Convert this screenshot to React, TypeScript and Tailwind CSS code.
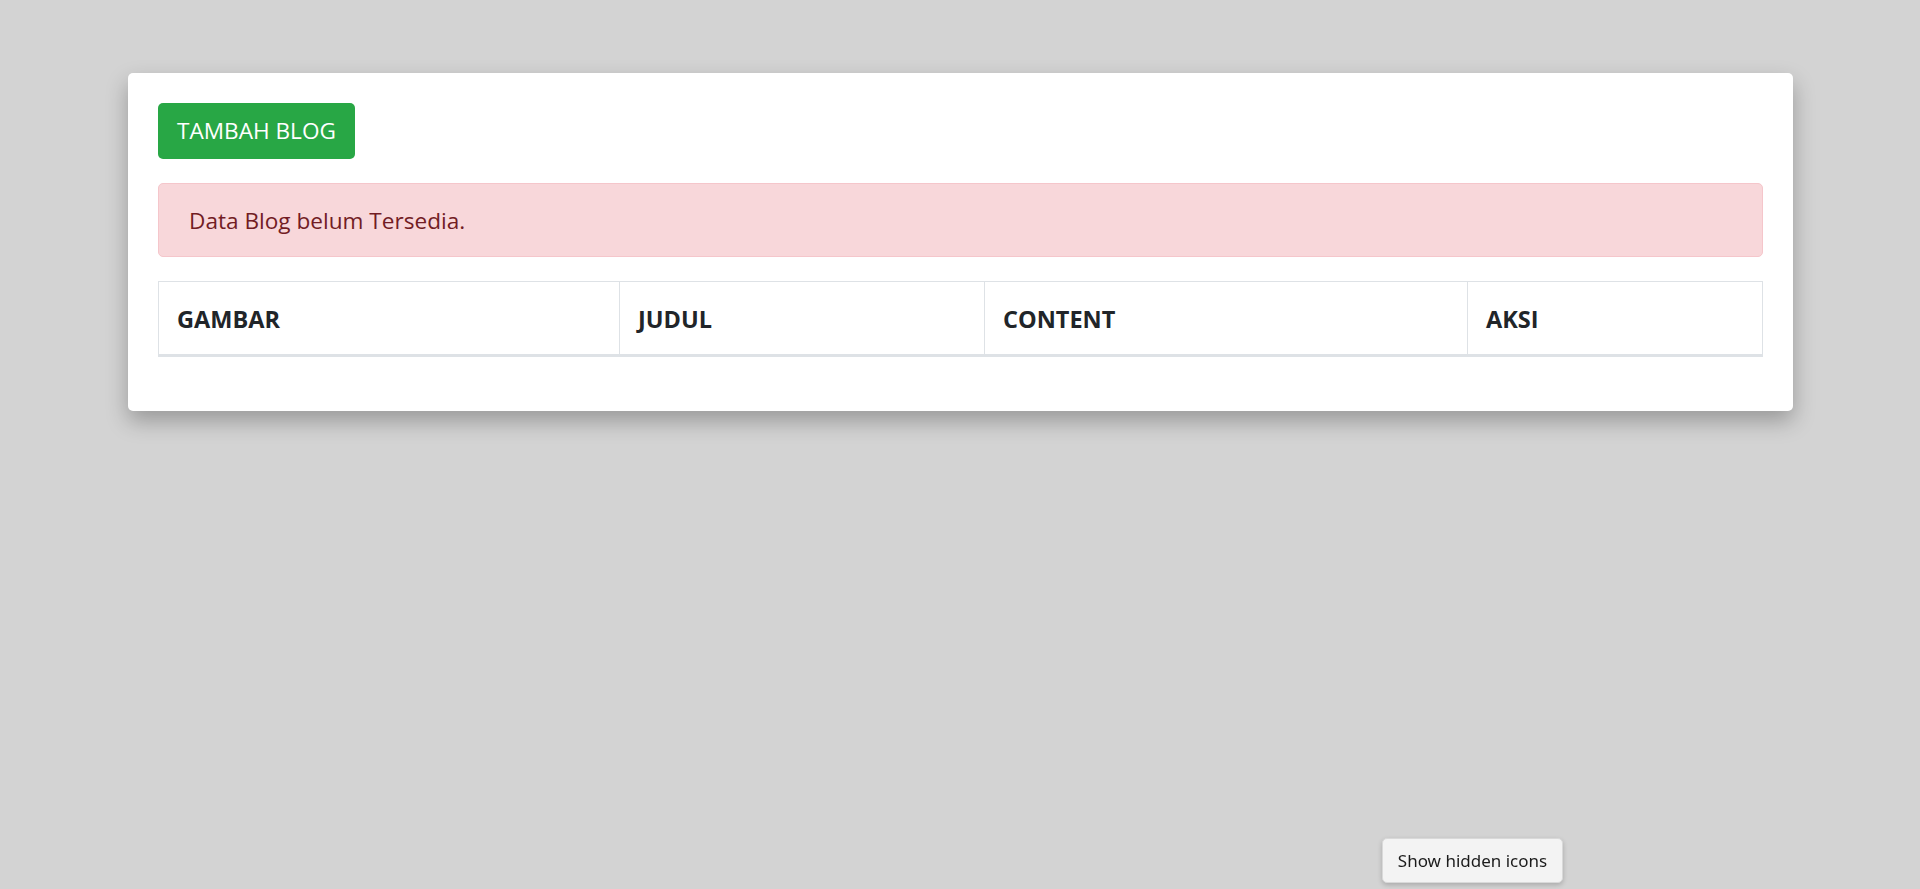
import React from 'react';

const columns = [
  { label: 'GAMBAR', width: 'w-[461px]' },
  { label: 'JUDUL', width: 'w-[365px]' },
  { label: 'CONTENT', width: 'w-[483px]' },
  { label: 'AKSI', width: 'w-auto' },
];

const App: React.FC = () => {
  return (
    <div className="min-h-screen bg-[#d3d3d3] pt-[73px] font-['Open_Sans',sans-serif]">
      <div className="ml-[128px] w-[1665px] rounded-[5px] bg-white p-[30px] pb-[30px] shadow-[0_10px_22px_rgba(0,0,0,0.28)]">
        <button className="h-[56px] w-[197px] rounded-[5px] bg-[#28a745] text-[22.6px] text-white">
          TAMBAH BLOG
        </button>

        <div className="mt-[24px] flex h-[74px] items-center rounded-[5px] border border-[#f5c6cb] bg-[#f8d7da] px-[30px] pt-[2px] text-[22.6px] text-[#721c24]">
          Data Blog belum Tersedia.
        </div>

        {/* Table header only, no rows yet */}
        <table className="mt-[24px] mb-[24px] w-full border-collapse text-[#212529]">
          <thead>
            <tr>
              {columns.map((c) => (
                <th
                  key={c.label}
                  className={`${c.width} h-[74px] border border-b-[3px] border-[#dee2e6] px-[18px] pt-[3px] text-left text-[23.5px] font-bold`}
                >
                  {c.label}
                </th>
              ))}
            </tr>
          </thead>
          <tbody />
        </table>
      </div>

      <div className="fixed left-[1382px] top-[838px] flex h-[45px] w-[181px] items-center justify-center rounded-[5px] border border-[#d9d9d9] bg-[#f3f3f3] text-[17px] text-[#1b1b1b] shadow-[0_2px_5px_rgba(0,0,0,0.2)] font-['Noto_Sans',sans-serif]">
        Show hidden icons
      </div>
    </div>
  );
};

export default App;
